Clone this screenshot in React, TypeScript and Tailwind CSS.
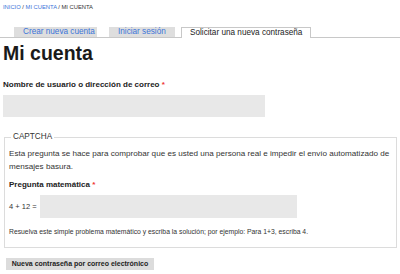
export default function App() {
	return (
		<div className="w-[400px] h-[274px] overflow-hidden bg-white text-[#333] font-['Liberation_Sans',Arial,sans-serif]">
			{/* Breadcrumb */}
			<div className="pt-[4px] pl-[3px] text-[5.8px] leading-[6px] uppercase">
				<a className="text-[#3b74d9]">Inicio</a>
				<span> / </span>
				<a className="text-[#3b74d9]">Mi cuenta</a>
				<span> / Mi cuenta</span>
			</div>

			{/* Tabs */}
			<div className="mt-[17px] flex items-end border-b border-[#c8c8c8] h-[11px]">
				<a className="ml-[14px] w-[83px] h-[10px] bg-[#dedede] text-[#3b74d9] text-[8.2px] leading-[10px] pl-[9px]">
					Crear nueva cuenta
				</a>
				<a className="ml-[12px] w-[66px] h-[10px] bg-[#dedede] text-[#3b74d9] text-[8.2px] leading-[10px] pl-[9px]">
					Iniciar sesión
				</a>
				<a className="ml-[6px] w-[130px] h-[11px] -mb-px bg-white border border-b-0 border-[#c8c8c8] text-[#222] text-[8.2px] leading-[10px] pl-[8px]">
					Solicitar una nueva contraseña
				</a>
			</div>

			{/* Title */}
			<h1 className="pl-[3px] mt-[4px] text-[19.5px] leading-[22px] font-bold text-[#1a1a1a]">Mi cuenta</h1>

			{/* Username */}
			<div className="pl-[3px] mt-[16px]">
				<label className="block text-[8px] leading-[10px] font-bold text-[#222]">
					Nombre de usuario o dirección de correo <span className="text-[#e33]">*</span>
				</label>
				<div className="mt-[5px] w-[262px] h-[22px] bg-[#e8e8e8]" />
			</div>

			{/* CAPTCHA */}
			<fieldset className="ml-[4px] mt-[15px] w-[393px] border border-[#dcdcdc] px-[4px] pb-[11px]">
				<legend className="ml-[2px] px-[2px] text-[8.2px] leading-[10px] uppercase text-[#333]">Captcha</legend>
				<p className="mt-[5px] text-[8.1px] leading-[13px] text-[#333]">
					Esta pregunta se hace para comprobar que es usted una persona real e impedir el envío automatizado de mensajes basura.
				</p>
				<label className="block mt-[7px] text-[8px] leading-[10px] font-bold text-[#222]">
					Pregunta matemática <span className="text-[#e33]">*</span>
				</label>
				<div className="mt-[5px] flex items-center gap-[3px]">
					<span className="text-[7.5px] leading-[10px]">4 + 12 =</span>
					<div className="w-[257px] h-[23px] bg-[#e8e8e8]" />
				</div>
				<p className="mt-[9px] text-[6.8px] leading-[9px] text-[#333]">
					Resuelva este simple problema matemático y escriba la solución; por ejemplo: Para 1+3, escriba 4.
				</p>
			</fieldset>

			{/* Submit */}
			<button className="ml-[6px] mt-[10px] w-[148px] h-[12px] bg-[#dcdcdc] text-[7px] leading-[12px] font-bold text-[#222]">
				Nueva contraseña por correo electrónico
			</button>
		</div>
	);
}
